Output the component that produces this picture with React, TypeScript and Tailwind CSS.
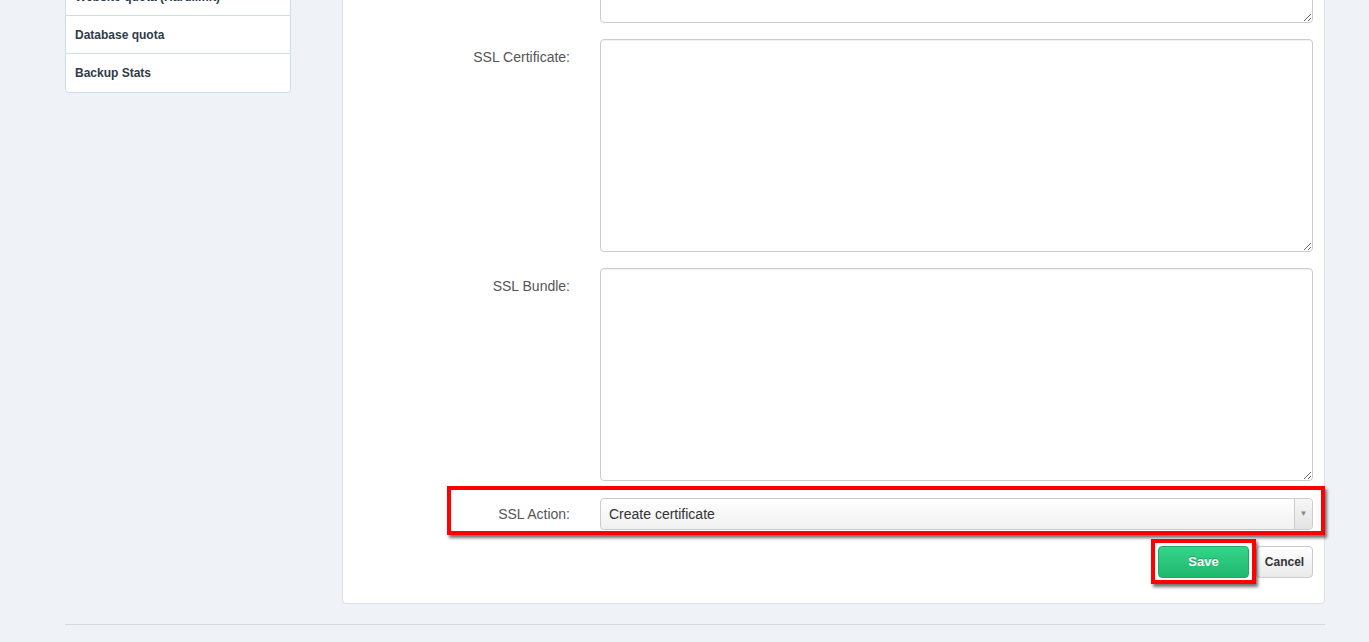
import React from 'react';

const font = { fontFamily: '"Liberation Sans", Arial, sans-serif' };

const sideItems = ['Website quota (Hardlimit)', 'Database quota', 'Backup Stats'];

const TextRow: React.FC<{ label: string }> = ({ label }) => (
    <div className="flex items-start mb-[16px]">
        <label className="w-[227px] mr-[30px] shrink-0 text-right pt-[8px] text-[14px] text-[#555] leading-[20px]">{label}</label>
        <textarea
            className="block w-[713px] h-[213px] border border-[#ccc] rounded-[4px] bg-white shadow-[inset_0_1px_1px_rgba(0,0,0,0.06)] outline-none"
        />
    </div>
);

export default function App() {
    return (
        <div style={font} className="w-[1369px] h-[642px] overflow-hidden bg-[#eff3f7]">
            <div className="flex items-start -mt-[201px] pl-[65px]">
                <div className="w-[226px] mt-[178px] bg-white border border-[#c9dff0] rounded-[4px] overflow-hidden">
                    {sideItems.map((s, i) => (
                        <div
                            key={s}
                            className={`h-[38px] flex items-center px-[9px] text-[12px] font-bold text-[#2f3b48] ${i < sideItems.length - 1 ? 'border-b border-[#c9dff0]' : ''}`}
                        >
                            {s}
                        </div>
                    ))}
                </div>

                <div className="ml-[51px] w-[983px] bg-white border border-[#dcdfe3] rounded-[4px] pt-[10px] pr-[11px] pb-[25px]">
                    <TextRow label="SSL Key:" />
                    <TextRow label="SSL Certificate:" />
                    <TextRow label="SSL Bundle:" />

                    <div className="relative flex items-center mt-[17px]">
                        <div className="absolute left-[104px] -right-[12px] -top-[12px] h-[49px] border-[4px] border-[#ff0000] shadow-[2px_3px_3px_rgba(0,0,0,0.55)] pointer-events-none" />
                        <label className="w-[227px] mr-[30px] shrink-0 text-right text-[14px] text-[#555]">SSL Action:</label>
                        <div className="relative w-[713px] h-[32px] border border-[#ccc] rounded-[4px] bg-gradient-to-b from-white to-[#f1f1f1] flex items-center">
                            <span className="pl-[8px] text-[14px] text-[#333]">Create certificate</span>
                            <div className="absolute right-0 top-0 bottom-0 w-[18px] border-l border-[#ccc] rounded-r-[4px] bg-gradient-to-b from-[#f7f7f7] to-[#e3e3e3] flex items-center justify-center">
                                <span className="text-[8px] text-[#888]">▼</span>
                            </div>
                        </div>
                    </div>

                    <div className="flex justify-end items-center gap-[7px] mt-[15px]">
                        <div className="relative">
                            <div className="absolute -left-[7px] -right-[7px] -top-[6px] -bottom-[6px] border-[4px] border-[#ff0000] shadow-[2px_3px_3px_rgba(0,0,0,0.55)] pointer-events-none" />
                            <button className="w-[91px] h-[32px] rounded-[4px] border border-[#1fa863] bg-gradient-to-b from-[#34d58a] to-[#1fb86e] text-white text-[13px] font-bold [text-shadow:0_-1px_0_rgba(0,0,0,0.25)] mt-[1px]">
                                Save
                            </button>
                        </div>
                        <button className="w-[57px] h-[32px] rounded-[4px] border border-[#ccc] bg-gradient-to-b from-white to-[#eaeaea] text-[#333] text-[12px] font-bold">
                            Cancel
                        </button>
                    </div>
                </div>
            </div>
            <div className="mx-[65px] w-[1260px] mt-[20px] border-t border-[#d5dadf]" />
        </div>
    );
}
